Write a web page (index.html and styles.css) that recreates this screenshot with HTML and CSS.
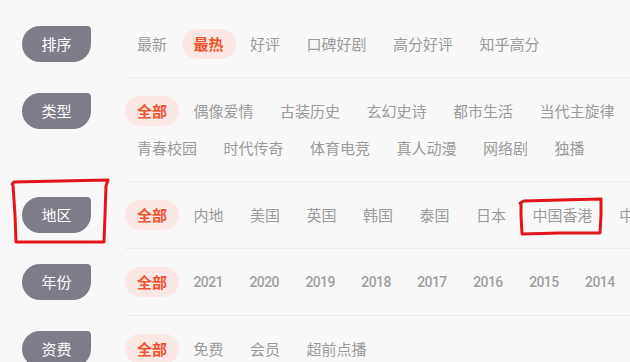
FILE: index.html
```html
<!DOCTYPE html>
<html lang="zh-CN">
<head>
<meta charset="utf-8">
<title>筛选</title>
<link rel="stylesheet" href="styles.css">
</head>
<body>
<div class="filter">
  <div class="row">
    <div class="label">排序</div>
    <div class="items">
      <span class="item">最新</span>
      <span class="item active">最热</span>
      <span class="item">好评</span>
      <span class="item">口碑好剧</span>
      <span class="item">高分好评</span>
      <span class="item">知乎高分</span>
    </div>
  </div>
  <div class="row">
    <div class="label">类型</div>
    <div class="items">
      <span class="item active">全部</span>
      <span class="item">偶像爱情</span>
      <span class="item">古装历史</span>
      <span class="item">玄幻史诗</span>
      <span class="item">都市生活</span>
      <span class="item">当代主旋律</span>
      <span class="item">青春校园</span>
      <span class="item">时代传奇</span>
      <span class="item">体育电竞</span>
      <span class="item">真人动漫</span>
      <span class="item">网络剧</span>
      <span class="item">独播</span>
    </div>
  </div>
  <div class="row">
    <div class="label">地区</div>
    <div class="items nowrap">
      <span class="item active">全部</span>
      <span class="item">内地</span>
      <span class="item">美国</span>
      <span class="item">英国</span>
      <span class="item">韩国</span>
      <span class="item">泰国</span>
      <span class="item">日本</span>
      <span class="item">中国香港</span>
      <span class="item">中国台湾</span>
      <span class="item">其他</span>
    </div>
  </div>
  <div class="row">
    <div class="label">年份</div>
    <div class="items nowrap">
      <span class="item active">全部</span>
      <span class="item num">2021</span>
      <span class="item num">2020</span>
      <span class="item num">2019</span>
      <span class="item num">2018</span>
      <span class="item num">2017</span>
      <span class="item num">2016</span>
      <span class="item num">2015</span>
      <span class="item num">2014</span>
      <span class="item num">2013</span>
    </div>
  </div>
  <div class="row">
    <div class="label">资费</div>
    <div class="items">
      <span class="item active">全部</span>
      <span class="item">免费</span>
      <span class="item">会员</span>
      <span class="item">超前点播</span>
    </div>
  </div>
</div>
<svg class="marks" width="630" height="362" viewBox="0 0 630 362" xmlns="http://www.w3.org/2000/svg">
  <path d="M12 184 L14 182 L60 181 L108 180 L106 186 L105 215 L104 242 L60 242 L16 242 L15 215 L13 185" fill="none" stroke="#e3141d" stroke-width="3" stroke-linejoin="round" stroke-linecap="round"/>
  <path d="M520 203 L524 201 L560 200 L601 199 L601 215 L600 233 L560 233 L522 234 L521 215 L521 203" fill="none" stroke="#e3141d" stroke-width="3" stroke-linejoin="round" stroke-linecap="round"/>
</svg>
</body>
</html>
```

FILE: styles.css
```css
* {
  box-sizing: border-box;
}

html, body {
  margin: 0;
  padding: 0;
  background: #f8f8f8;
  width: 630px;
  height: 362px;
  overflow: hidden;
}

body {
  position: relative;
  font-family: "Noto Sans CJK SC", "Noto Sans", sans-serif;
}

.filter {
  padding: 11px 0 0 22px;
}

.row {
  display: flex;
  align-items: flex-start;
}

.label {
  flex: none;
  width: 69px;
  height: 36px;
  margin: 15px 34px 0 0;
  background: #7d7c88;
  color: #ffffff;
  font-size: 15px;
  line-height: 36px;
  text-align: center;
  border-radius: 18px 4px 18px 18px;
}

.items {
  flex: 1;
  min-width: 0;
  display: flex;
  flex-wrap: wrap;
  align-content: flex-start;
  gap: 7px 2.5px;
  padding: 18px 0;
  border-bottom: 1px solid #ececec;
}

.items.nowrap {
  flex-wrap: nowrap;
  overflow: hidden;
}

.row:last-child .items {
  border-bottom: none;
}

.item {
  flex: none;
  height: 30px;
  padding: 0 12px;
  font-size: 15px;
  line-height: 30px;
  color: #9b9b9b;
  white-space: nowrap;
  border-radius: 15px;
}

.item.num {
  font-family: Roboto, "Noto Sans", sans-serif;
  font-size: 14px;
  letter-spacing: -0.6px;
  font-weight: 500;
  color: #a0a0a0;
}

.item.active {
  background: #fbe8e5;
  color: #f2512d;
  font-weight: 700;
}

.marks {
  position: absolute;
  left: 0;
  top: 0;
  pointer-events: none;
}
```
